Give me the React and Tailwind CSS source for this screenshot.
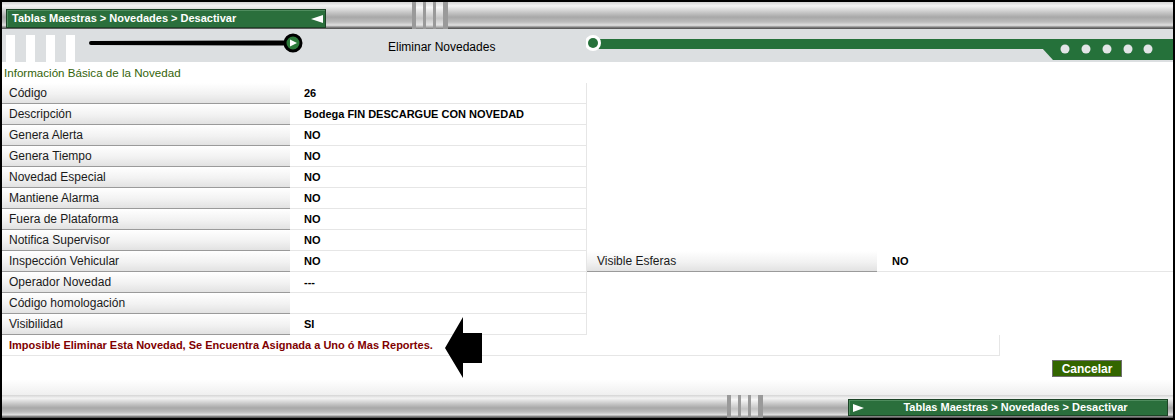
import React from 'react';

const metal = "bg-[linear-gradient(to_bottom,#d4d4d4_0%,#f3f3f3_14%,#cbcbcb_36%,#a8a8a8_56%,#bcbcbc_74%,#e0e0e0_86%,#7c7c7c_94%,#4c4c4c_100%)]";

const rows = [
    ['Código', '26'],
    ['Descripción', 'Bodega FIN DESCARGUE CON NOVEDAD'],
    ['Genera Alerta', 'NO'],
    ['Genera Tiempo', 'NO'],
    ['Novedad Especial', 'NO'],
    ['Mantiene Alarma', 'NO'],
    ['Fuera de Plataforma', 'NO'],
    ['Notifica Supervisor', 'NO'],
    ['Inspección Vehicular', 'NO', 'Visible Esferas', 'NO'],
    ['Operador Novedad', '---'],
    ['Código homologación', ''],
    ['Visibilidad', 'SI'],
];

function Grip() {
    return (
        <div className="flex w-[36px] shrink-0 gap-[3px] bg-[#9a9a9a] pl-[4px] pr-[5px]">
            {[0, 1, 2].map((i) => (
                <div key={i} className="w-[7px] bg-[linear-gradient(to_bottom,#d8d8d8_0%,#f7f7f7_20%,#c4c4c4_60%,#e6e6e6_85%,#7a7a7a_100%)]" />
            ))}
        </div>
    );
}

function LabelCell({ children, width, pad }) {
    return (
        <div className={`${width} ${pad} flex h-full shrink-0 items-center border-b border-[#9a9a9a] bg-[linear-gradient(to_bottom,#ffffff_0%,#f2f2f2_55%,#e2e2e2_100%)] text-[12px] text-[#1a1a1a]`}>
            {children}
        </div>
    );
}

export default function App() {
    return (
        <div className="relative h-[420px] w-[1175px] overflow-hidden border-2 border-black bg-white font-['Liberation_Sans',Arial,sans-serif]">
            {/* top bar */}
            <div className={`flex h-[27px] ${metal}`}>
                <div className="w-[410px] shrink-0">
                    <div className="ml-[4px] mt-[7px] flex h-[19px] w-[320px] items-center justify-between border border-[#1c4426] bg-[#2a6f3c] pl-[5px] pr-[2px] shadow-[inset_1px_1px_0_#4f8d5f]">
                        <span className="text-[11px] font-bold text-white">Tablas Maestras &gt; Novedades &gt; Desactivar</span>
                        <svg width="12" height="8" viewBox="0 0 12 8">
                            <polygon points="0,4 12,0 12,8" fill="#ffffff" />
                        </svg>
                    </div>
                </div>
                <Grip />
                <div className="flex-1" />
            </div>

            {/* title strip */}
            <div className="flex h-[33px] bg-[#dcdfe1]">
                <div className="ml-[4px] flex gap-[11px] pt-[6px]">
                    {[0, 1, 2, 3].map((i) => (
                        <div key={i} className="h-[27px] w-[9px] bg-white" />
                    ))}
                </div>
                <svg width="225" height="33" viewBox="0 0 225 33" className="ml-[5px] shrink-0">
                    <path d="M9 14 Q9 12 11 12 L205 11.5 L205 16.5 L11 16 Q9 16 9 14 Z" fill="#000" />
                    <circle cx="213" cy="14" r="8" fill="#2c7a3a" stroke="#000" strokeWidth="3" />
                    <polygon points="210,10.5 217,14 210,17.5" fill="#ffffff" />
                </svg>
                <div className="flex w-[281px] shrink-0 items-center pl-[83px] pt-[2px] text-[12px] text-black">
                    Eliminar Novedades
                </div>
                <svg width="587" height="33" viewBox="0 0 587 33" className="shrink-0">
                    <rect x="10" y="10" width="577" height="10" fill="#25713a" />
                    <polygon points="456,19 587,19 587,31 467,31" fill="#25713a" />
                    <circle cx="7" cy="14" r="8" fill="#ffffff" />
                    <circle cx="7" cy="14" r="5" fill="#25713a" />
                    {[479, 500, 521, 542, 562].map((x) => (
                        <circle key={x} cx={x} cy="20" r="4.5" fill="#e3e5e7" />
                    ))}
                </svg>
            </div>

            {/* section title */}
            <div className="flex h-[21px] items-center pl-[2px] text-[11.6px] text-[#336309]">
                Información Básica de la Novedad
            </div>

            {/* data rows */}
            <div className="flex flex-col">
                {rows.map(([label, value, label2, value2]) => (
                    <div key={label} className="flex h-[21px]">
                        <LabelCell width="w-[288px]" pad="pl-[7px]">{label}</LabelCell>
                        <div className="flex h-full w-[297px] shrink-0 items-center border-b border-r border-[#e6e6e6] pl-[14px] text-[11px] font-bold text-black">
                            {value}
                        </div>
                        {label2 && (
                            <>
                                <LabelCell width="w-[290px]" pad="pl-[10px]">{label2}</LabelCell>
                                <div className="flex h-full flex-1 items-center border-b border-[#e6e6e6] pl-[15px] text-[11px] font-bold text-black">
                                    {value2}
                                </div>
                            </>
                        )}
                    </div>
                ))}
                <div className="flex h-[21px] w-[998px] items-center border-b border-r border-[#e6e6e6] pl-[7px] text-[11px] font-bold text-[#800000]">
                    Imposible Eliminar Esta Novedad, Se Encuentra Asignada a Uno ó Mas Reportes.
                </div>
            </div>

            {/* actions */}
            <div className="flex h-[39px] items-start justify-end bg-[linear-gradient(to_bottom,#ffffff_0%,#ffffff_60%,#efefef_100%)] pr-[51px] pt-[4px]">
                <button className="h-[17px] w-[70px] border border-[#6f6f6f] bg-[#336600] text-[12px] font-bold leading-none text-white">
                    Cancelar
                </button>
            </div>

            {/* bottom bar */}
            <div className={`flex h-[23px] ${metal}`}>
                <div className="w-[725px] shrink-0" />
                <Grip />
                <div className="w-[85px] shrink-0" />
                <div className="mt-[4px] flex h-[17px] w-[320px] shrink-0 items-center border border-[#1c4426] bg-[#2a6f3c] pl-[4px] shadow-[inset_1px_1px_0_#4f8d5f]">
                    <svg width="11" height="8" viewBox="0 0 11 8">
                        <polygon points="0,0 11,4 0,8" fill="#ffffff" />
                    </svg>
                    <span className="flex-1 text-center text-[11px] font-bold text-white">Tablas Maestras &gt; Novedades &gt; Desactivar</span>
                </div>
            </div>

            {/* pointer arrow */}
            <svg width="38" height="62" viewBox="0 0 38 62" className="absolute left-[443px] top-[315px]">
                <polygon points="0,31 18,0 18,16 37,16 37,46 18,46 18,61" fill="#000" />
            </svg>
        </div>
    );
}
